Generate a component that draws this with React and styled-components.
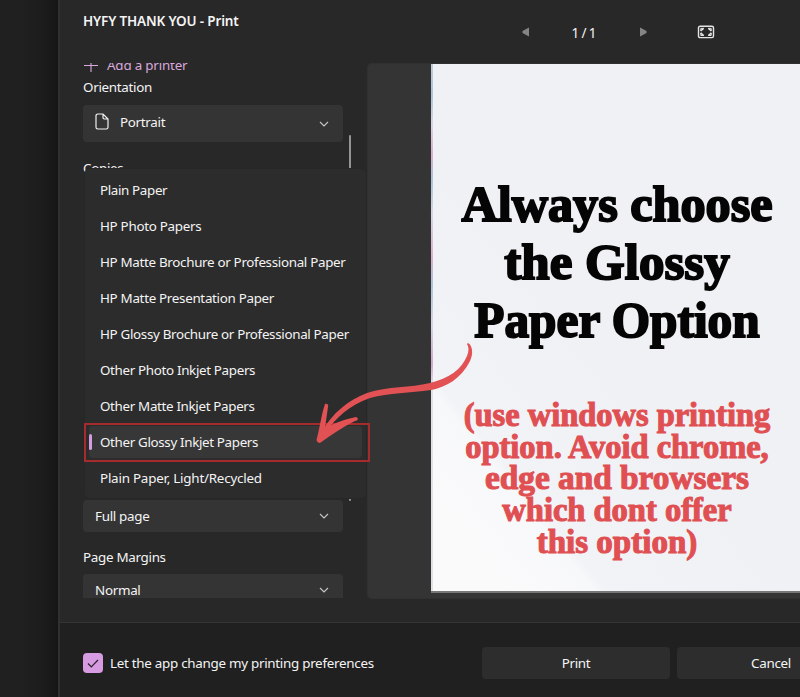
import React from 'react';
import styled, { createGlobalStyle } from 'styled-components';

const GlobalStyle = createGlobalStyle`
  * {
    box-sizing: border-box;
  }

  body {
    margin: 0;
    overflow: hidden;
    background: #202020;
  }

  button {
    font: inherit;
    color: inherit;
    border: none;
  }
`;

const Desktop = styled.div`
  display: flex;
  width: 800px;
  height: 697px;
  overflow: hidden;
  font-family: 'Noto Sans', 'Open Sans', sans-serif;
  font-size: 13.4px;
  letter-spacing: -0.3px;
  color: #f4f4f4;
`;

const Backdrop = styled.div`
  flex: none;
  width: 58px;
  background: linear-gradient(to right, #202020 35%, #1c1c1c 75%, #161616);
`;

const Dialog = styled.div`
  position: relative;
  flex: 1;
  min-width: 0;
  display: flex;
  flex-direction: column;
  border-left: 2px solid #303030;
  background: #282828;
`;

const Header = styled.header`
  display: flex;
  height: 63px;
  padding-left: 23px;
`;

const Title = styled.h1`
  flex: none;
  width: 439px;
  margin: 11px 0 0;
  font-size: 13.5px;
  line-height: 20px;
  font-weight: 600;
  letter-spacing: -0.16px;
`;

const Pager = styled.div`
  display: flex;
  align-items: center;
  margin-top: 3px;
  height: 58px;
`;

const PageCount = styled.span`
  width: 36px;
  margin: 2px 38px 0 37px;
  text-align: center;
  font-size: 13.5px;
  letter-spacing: 0.1px;
  word-spacing: -1.5px;
  white-space: nowrap;
`;

const FitIcon = styled.svg`
  margin-left: 50px;
`;

const Body = styled.main`
  display: flex;
  height: 559px;
`;

const Settings = styled.section`
  position: relative;
  flex: none;
  width: 307px;
  height: 535px;
  padding-left: 23px;
  overflow: hidden;
`;

const AddPrinter = styled.div`
  display: flex;
  align-items: center;
  gap: 9px;
  height: 20px;
  margin: -8px 0 2px 1px;
  color: #d9a9dd;
  letter-spacing: -0.2px;
`;

const Label = styled.div`
  height: 20px;
  line-height: 20px;
  margin-top: ${(props) => props.$top || 0}px;
`;

const Select = styled.div`
  display: flex;
  align-items: center;
  gap: 11px;
  width: 260px;
  height: ${(props) => (props.$tall ? 37 : 32)}px;
  margin-top: ${(props) => props.$top}px;
  padding: 0 14px ${(props) => (props.$tall ? 4 : 0)}px 12px;
  border-radius: 4px;
  background: #343434;

  svg:last-child {
    margin: ${(props) => (props.$tall ? 4 : 0)}px 0 0 auto;
  }
`;

const ScrollThumb = styled.div`
  position: absolute;
  top: 72px;
  left: 289px;
  width: 2px;
  height: 366px;
  border-radius: 1px;
  background: #949494;
`;

const Preview = styled.section`
  flex: 1;
  height: 536px;
  padding-left: 63px;
  border: 1px solid #303030;
  border-right: none;
  border-radius: 5px 0 0 5px;
  background: #343434;
`;

const Sheet = styled.div`
  height: 529px;
  padding: 111px 0 0 1px;
  overflow: hidden;
  border-bottom: 2px solid #777;
  background: linear-gradient(
        #c3cbd8,
        #a9c3da 30px,
        #d5d5e4 60px,
        #dcaccb 90px,
        #a9c3da 115px,
        #d5d5e4 150px,
        #dcaccb 195px,
        #a9c3da 220px,
        #d5d5e4 260px,
        #cfa6cf 300px,
        #dfe1e8 322px
      )
      left / 2px 100% no-repeat,
    linear-gradient(51deg, #fafafb 10%, #f7f8fa 20.5%, #f2f3f6 22%, #f0f1f5 45%);
`;

const Headline = styled.div`
  width: 370px;
  font-family: 'Liberation Serif', serif;
  font-weight: 700;
  font-size: 51px;
  line-height: 58px;
  letter-spacing: 0;
  text-align: center;
  color: #050505;
  -webkit-text-stroke: 2px #050505;
`;

const Note = styled.div`
  width: 370px;
  margin-top: 51px;
  font-family: 'Liberation Serif', serif;
  font-weight: 700;
  font-size: 33px;
  line-height: 31.7px;
  letter-spacing: 0;
  text-align: center;
  color: #e04f52;
  -webkit-text-stroke: 1.1px #e04f52;
`;

const Line = styled.div`
  white-space: nowrap;
  transform: scaleX(${(props) => props.$stretch || 1});
`;

const Footer = styled.footer`
  display: flex;
  align-items: flex-start;
  flex: 1;
  padding: 24px 0 0 23px;
  border-top: 1px solid #343434;
  background: #202020;
`;

const Preference = styled.label`
  display: flex;
  flex: none;
  align-items: center;
  gap: 7px;
  width: 399px;
  height: 32px;
  letter-spacing: -0.28px;
`;

const CheckBox = styled.span`
  display: flex;
  align-items: center;
  justify-content: center;
  width: 20px;
  height: 20px;
  border-radius: 4px;
  background: #d69be0;
`;

const Button = styled.button`
  flex: none;
  width: 188px;
  height: 32px;
  margin-right: 7px;
  padding: 0;
  border-radius: 4px;
  background: #2d2d2d;
  letter-spacing: -0.3px;
`;

const Menu = styled.ul`
  position: absolute;
  top: 168px;
  left: 24px;
  width: 283px;
  height: 331px;
  margin: 0;
  padding: 4px;
  list-style: none;
  border: 1px solid #272727;
  border-radius: 6px;
  background: #2c2c2c;
`;

const MenuItem = styled.li`
  position: relative;
  display: flex;
  align-items: center;
  height: 32px;
  margin: 1px 0 4px;
  padding-left: 11px;
  border-radius: 4px;
  white-space: nowrap;
  letter-spacing: ${(props) => props.$spacing}px;
  background: ${(props) => (props.$selected ? '#373737' : 'transparent')};

  &::before {
    content: '';
    display: ${(props) => (props.$selected ? 'block' : 'none')};
    position: absolute;
    left: 0;
    width: 3px;
    height: 16px;
    border-radius: 2px;
    background: #d69be0;
  }
`;

const Highlight = styled.div`
  position: absolute;
  top: 423px;
  left: 24px;
  width: 286px;
  height: 39px;
  border: 2px solid #a52b2d;
`;

const Arrow = styled.svg`
  position: absolute;
  top: 340px;
  left: 250px;
`;

const paperTypes = [
  { name: 'Plain Paper', spacing: -0.36 },
  { name: 'HP Photo Papers', spacing: -0.3 },
  { name: 'HP Matte Brochure or Professional Paper', spacing: -0.32 },
  { name: 'HP Matte Presentation Paper', spacing: -0.31 },
  { name: 'HP Glossy Brochure or Professional Paper', spacing: -0.33 },
  { name: 'Other Photo Inkjet Papers', spacing: -0.34 },
  { name: 'Other Matte Inkjet Papers', spacing: -0.34 },
  { name: 'Other Glossy Inkjet Papers', spacing: -0.35, selected: true },
  { name: 'Plain Paper, Light/Recycled', spacing: -0.22 },
];

const Chevron = () => (
  <svg width="10" height="6" viewBox="0 0 10 6" fill="none">
    <path d="M1 1l4 4 4-4" stroke="#c8c8c8" strokeWidth="1.1" />
  </svg>
);

const App = () => {
  return (
    <>
      <GlobalStyle />
      <Desktop>
        <Backdrop />
        <Dialog>
          <Header>
            <Title>HYFY THANK YOU - Print</Title>
            <Pager>
              <svg width="7" height="10" viewBox="0 0 7 10">
                <path d="M7 .5v9L.5 6V4z" fill="#858585" />
              </svg>
              <PageCount>1 / 1</PageCount>
              <svg width="7" height="10" viewBox="0 0 7 10">
                <path d="M0 .5v9L6.5 6V4z" fill="#858585" />
              </svg>
              <FitIcon
                width="18"
                height="14"
                viewBox="0 0 18 14"
                fill="none"
                stroke="#e6e6e6"
              >
                <rect x="1.5" y="1.2" width="15" height="11.4" rx="1.6" strokeWidth="1.4" />
                <path
                  strokeWidth="1.5"
                  d="M3.6 6l3-2.6M11.4 3.4l3 2.6M14.4 7.9l-3 2.6M6.6 10.5l-3-2.6"
                />
                <path
                  strokeWidth="1"
                  d="M3.8 5.7V3.4h3M11.2 3.4h3v2.3M14.2 8.2v2.3h-3M6.8 10.5h-3V8.2"
                />
              </FitIcon>
            </Pager>
          </Header>
          <Body>
            <Settings>
              <AddPrinter>
                <svg width="14" height="14" viewBox="0 0 14 14">
                  <path d="M7 0v14M0 7.5h14" stroke="#d9a9dd" strokeWidth="1.1" />
                </svg>
                Add a printer
              </AddPrinter>
              <Label>Orientation</Label>
              <Select $top={8} $tall>
                <svg width="14" height="17" viewBox="0 0 14 17" fill="none">
                  <path
                    d="M2.8 1H8l5 5v8.2A1.8 1.8 0 0 1 11.2 16H2.8A1.8 1.8 0 0 1 1 14.2V2.8A1.8 1.8 0 0 1 2.8 1zM8 1v3.6C8 5.4 8.6 6 9.4 6H13"
                    stroke="#f0f0f0"
                    strokeWidth="1.2"
                  />
                </svg>
                Portrait
                <Chevron />
              </Select>
              <Label $top={16}>Copies</Label>
              <Select $top={322}>
                Full page
                <Chevron />
              </Select>
              <Label $top={15}>Page Margins</Label>
              <Select $top={7}>
                Normal
                <Chevron />
              </Select>
              <ScrollThumb />
            </Settings>
            <Preview>
              <Sheet>
                <Headline>
                  <Line $stretch={0.985}>Always choose</Line>
                  <Line>the Glossy</Line>
                  <Line $stretch={0.967}>Paper Option</Line>
                </Headline>
                <Note>
                  <Line $stretch={0.983}>(use windows printing</Line>
                  <Line $stretch={0.983}>option. Avoid chrome,</Line>
                  <Line $stretch={1.01}>edge and browsers</Line>
                  <Line $stretch={0.985}>which dont offer</Line>
                  <Line>this option)</Line>
                </Note>
              </Sheet>
            </Preview>
          </Body>
          <Footer>
            <Preference>
              <CheckBox>
                <svg width="12" height="9" viewBox="0 0 12 9" fill="none">
                  <path d="M1 4.5L4.3 8 11 1" stroke="#2a1f2c" strokeWidth="1.2" />
                </svg>
              </CheckBox>
              Let the app change my printing preferences
            </Preference>
            <Button>Print</Button>
            <Button>Cancel</Button>
          </Footer>
          <Menu>
            {paperTypes.map((paper) => (
              <MenuItem
                key={paper.name}
                $spacing={paper.spacing}
                $selected={paper.selected}
              >
                {paper.name}
              </MenuItem>
            ))}
          </Menu>
          <Highlight />
          <Arrow width="170" height="110" viewBox="310 340 170 110" fill="#e25255">
            <path d="M468 343C472 345 474 353 470 361C461 379 446 387 431 390C410 393 389 393 370 398C349 405 335 419 326 432L323 430C332 414 348 400 367 393C388 386 410 388 430 383C449 378 461 370 467 356C469 351 469 347 467 344z" />
            <path d="M325 404C327 403 329 405 328 407L325 428C333 424 345 419 356 417C359 418 358 421 355 421C343 427 331 435 320 443C317 443 316 440 317 438C320 427 321 416 325 404z" />
          </Arrow>
        </Dialog>
      </Desktop>
    </>
  );
};

export default App;
